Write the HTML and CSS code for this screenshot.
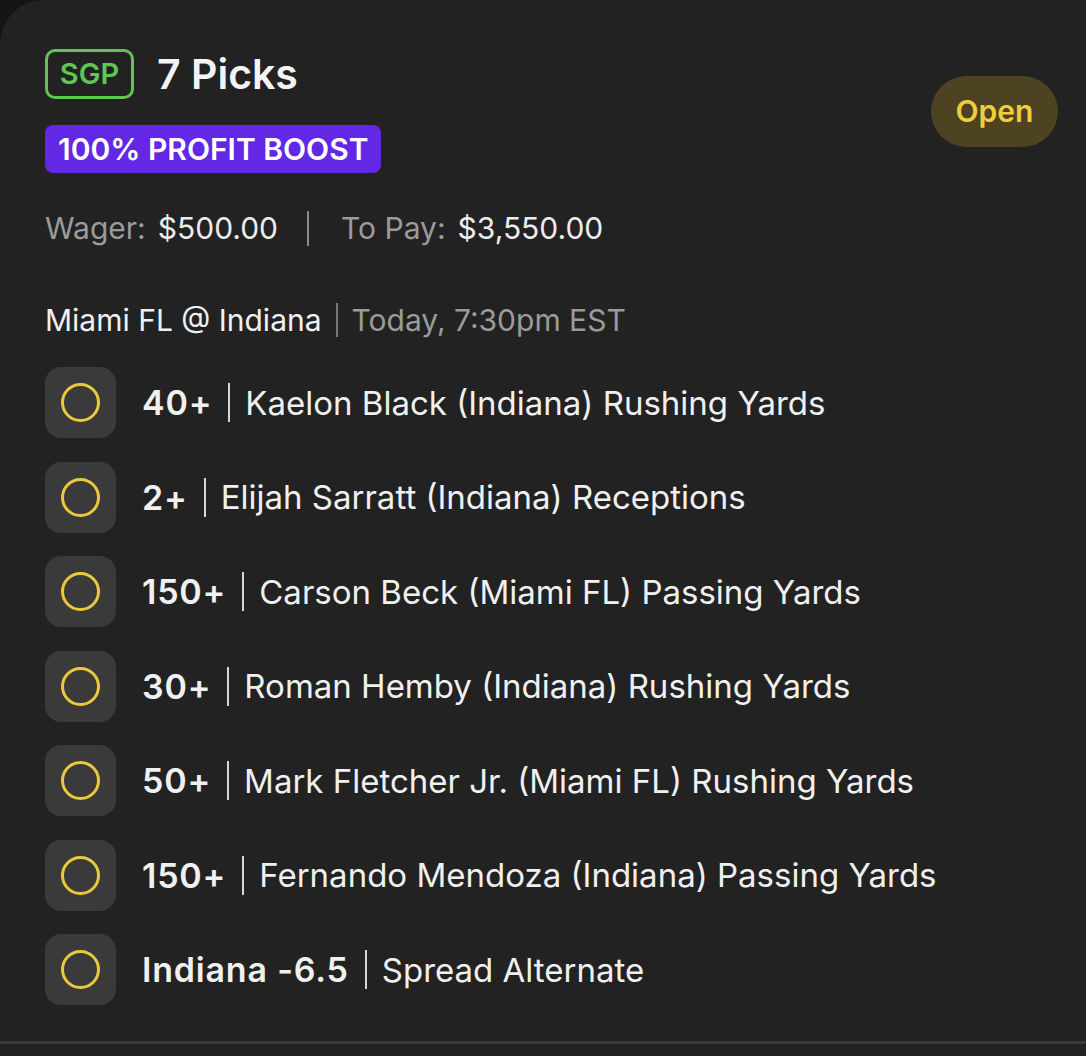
FILE: index.html
```html
<!DOCTYPE html>
<html lang="en">
<head>
    <meta charset="UTF-8">
    <meta name="viewport" content="width=device-width, initial-scale=1.0">
    <title>7 Picks - SGP</title>
    <link rel="stylesheet" href="styles.css">
</head>
<body>
    <div class="card">
        <div class="header">
            <div class="header-left">
                <div class="title-row">
                    <span class="sgp">SGP</span>
                    <h1>7 Picks</h1>
                </div>
                <span class="boost">100% PROFIT BOOST</span>
            </div>
            <span class="status">Open</span>
        </div>

        <div class="amounts">
            <span class="label">Wager:</span>
            <span class="value">$500.00</span>
            <span class="sep"></span>
            <span class="label">To Pay:</span>
            <span class="value">$3,550.00</span>
        </div>

        <div class="matchup">
            <span>Miami FL @ Indiana</span>
            <span class="bar"></span>
            <span class="time">Today, 7:30pm EST</span>
        </div>

        <ul class="picks">
            <li class="pick">
                <span class="check"><span class="ring"></span></span>
                <b>40+</b><span class="bar"></span><span>Kaelon Black (Indiana) Rushing Yards</span>
            </li>
            <li class="pick">
                <span class="check"><span class="ring"></span></span>
                <b>2+</b><span class="bar"></span><span>Elijah Sarratt (Indiana) Receptions</span>
            </li>
            <li class="pick">
                <span class="check"><span class="ring"></span></span>
                <b>150+</b><span class="bar"></span><span>Carson Beck (Miami FL) Passing Yards</span>
            </li>
            <li class="pick">
                <span class="check"><span class="ring"></span></span>
                <b>30+</b><span class="bar"></span><span>Roman Hemby (Indiana) Rushing Yards</span>
            </li>
            <li class="pick">
                <span class="check"><span class="ring"></span></span>
                <b>50+</b><span class="bar"></span><span>Mark Fletcher Jr. (Miami FL) Rushing Yards</span>
            </li>
            <li class="pick">
                <span class="check"><span class="ring"></span></span>
                <b>150+</b><span class="bar"></span><span>Fernando Mendoza (Indiana) Passing Yards</span>
            </li>
            <li class="pick">
                <span class="check"><span class="ring"></span></span>
                <b>Indiana -6.5</b><span class="bar"></span><span>Spread Alternate</span>
            </li>
        </ul>
        <div class="divider"></div>
    </div>
</body>
</html>
```

FILE: styles.css
```css
* {
    box-sizing: border-box;
}

body {
    margin: 0;
    background: #141414;
    font-family: Inter, "Noto Sans", Arial, sans-serif;
    overflow: hidden;
    height: 1056px;
}

.card {
    background: #222222;
    width: 1130px;
    min-height: 1100px;
    border-radius: 44px;
    padding: 49px 72px 0 45px;
    color: #f2f2f2;
}

.header {
    display: flex;
    justify-content: space-between;
    align-items: flex-start;
}

.title-row {
    display: flex;
    align-items: center;
    gap: 23px;
}

.sgp {
    display: inline-block;
    border: 3px solid #60c553;
    border-radius: 10px;
    color: #60c553;
    font-size: 29px;
    font-weight: 600;
    width: 89px;
    height: 50px;
    line-height: 44px;
    text-align: center;
}

h1 {
    margin: 0;
    font-size: 41px;
    font-weight: 600;
    color: #f4f4f4;
}

.boost {
    display: inline-block;
    margin-top: 26px;
    background: #6327e6;
    color: #ffffff;
    font-size: 30px;
    font-weight: 600;
    border-radius: 8px;
    height: 48px;
    line-height: 48px;
    padding: 0 13px;
}

.status {
    background: #4d4322;
    color: #f0cd3c;
    font-size: 30px;
    font-weight: 600;
    width: 127px;
    height: 71px;
    line-height: 71px;
    text-align: center;
    border-radius: 36px;
    margin-top: 27px;
}

.amounts {
    display: flex;
    align-items: center;
    margin-top: 35px;
    font-size: 30px;
    height: 40px;
}

.label {
    color: #9b9b9b;
}

.value {
    color: #ececec;
    margin-left: 12px;
}

.sep {
    width: 2px;
    height: 35px;
    background: #8a8a8a;
    margin: 0 32px 0 29px;
}

.matchup {
    display: flex;
    align-items: center;
    margin-top: 52px;
    font-size: 30px;
    height: 40px;
    color: #f0f0f0;
}

.matchup .bar {
    background: #777777;
    height: 34px;
    margin: 0 14px;
}

.time {
    color: #9b9b9b;
}

.bar {
    display: inline-block;
    width: 2px;
    height: 39px;
    background: #d6d6d6;
    margin: 0 15px 0 16px;
}

.picks {
    list-style: none;
    margin: 27px 0 0;
    padding: 0;
    display: flex;
    flex-direction: column;
    gap: 23.5px;
}

.pick {
    display: flex;
    align-items: center;
    font-size: 33px;
    color: #f0f0f0;
}

.check {
    width: 71px;
    height: 71px;
    border-radius: 16px;
    background: #3a3a3a;
    display: flex;
    align-items: center;
    justify-content: center;
    flex-shrink: 0;
    margin-right: 26px;
}

.ring {
    width: 39px;
    height: 39px;
    border: 3px solid #eac93b;
    border-radius: 50%;
}

.pick b {
    font-weight: 600;
    font-size: 34px;
    letter-spacing: 0.8px;
}

.divider {
    margin-top: 36px;
    margin-left: -45px;
    margin-right: -72px;
    height: 3px;
    background: #3b3b3b;
}
```
